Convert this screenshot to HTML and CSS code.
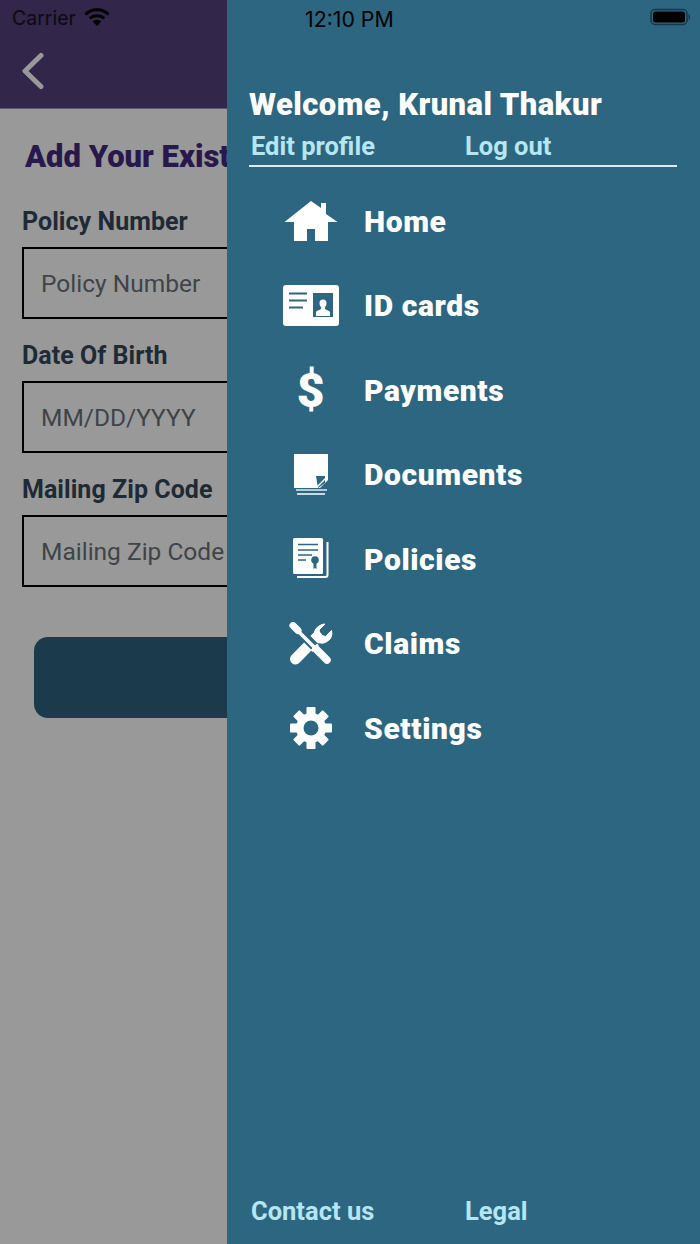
FILE: index.html
```html
<!DOCTYPE html>
<html lang="en">
<head>
    <meta charset="UTF-8">
    <meta name="viewport" content="width=device-width, initial-scale=1.0">
    <title>Menu</title>
    <link rel="stylesheet" href="styles.css">
</head>
<body>

    <!-- Status bar -->
    <div class="status-bar">
        <div class="status-left">
            <span>Carrier</span>
            <svg class="wifi" width="26" height="20" viewBox="0 0 26 20">
                <path d="M1.500 7.500a16.500 16.500 0 0 1 23 0" fill="none" stroke="#000" stroke-width="3"/>
                <path d="M5.800 11.500a10.500 10.500 0 0 1 14.400 0" fill="none" stroke="#000" stroke-width="3"/>
                <path d="M13 19l-4.200-4.600a6 6 0 0 1 8.400 0z" fill="#000"/>
            </svg>
        </div>
        <span class="status-time">12:10 PM</span>
        <svg class="battery" width="44" height="18" viewBox="0 0 44 18">
            <rect x="1" y="1.500" width="36" height="15" rx="4" fill="none" stroke="#16384a" stroke-width="1.500"/>
            <rect x="3" y="3.500" width="32" height="11" rx="2.500" fill="#000"/>
            <rect x="38.500" y="6.500" width="1.500" height="5" fill="#16384a"/>
        </svg>
    </div>

    <div class="screen">

        <!-- Page behind the menu -->
        <div class="page">
            <div class="page-header">
                <svg width="24" height="38" viewBox="0 0 24 38">
                    <path d="M20 3.500L4 19l16 15.500" fill="none" stroke="#999" stroke-width="5" stroke-linecap="round" stroke-linejoin="round"/>
                </svg>
            </div>
            <div class="page-body">
                <h2>Add Your Existing Policy</h2>
                <div class="field-label">Policy Number</div>
                <div class="field-box">Policy Number</div>
                <div class="field-label">Date Of Birth</div>
                <div class="field-box">MM/DD/YYYY</div>
                <div class="field-label">Mailing Zip Code</div>
                <div class="field-box">Mailing Zip Code</div>
                <div class="page-button"></div>
            </div>
        </div>

        <!-- Side menu -->
        <div class="drawer">
            <div class="welcome">Welcome, Krunal Thakur</div>
            <div class="profile-links">
                <span class="link-cell">Edit profile</span>
                <span>Log out</span>
            </div>

            <div class="menu">
                <div class="menu-row">
                    <div class="menu-icon">
                        <svg width="54" height="44" viewBox="0 0 54 44">
                            <path d="M27 2L37 9V4h5v11l11.500 8H44v19H31V30h-8v12H10V23H.5z" fill="#fff"/>
                        </svg>
                    </div>
                    <span>Home</span>
                </div>
                <div class="menu-row">
                    <div class="menu-icon">
                        <svg width="56" height="42" viewBox="0 0 56 42">
                            <rect x="0" y="0" width="56" height="41" rx="3" fill="#fff"/>
                            <path d="M6 8.500h18M6 15.500h18M6 22.500h14" stroke="#2d6681" stroke-width="1.800"/>
                            <rect x="30" y="8" width="20" height="24" fill="#2d6681"/>
                            <path d="M33 31v-3.500c0-2 4-2.500 5-3.500v-2c-1-1-1.500-2-1.500-4a3.500 3.500 0 0 1 7 0c0 2-.5 3-1.500 4v2c1 1 5 1.500 5 3.500V31z" fill="#fff"/>
                        </svg>
                    </div>
                    <span>ID cards</span>
                </div>
                <div class="menu-row">
                    <div class="menu-icon dollar">$</div>
                    <span>Payments</span>
                </div>
                <div class="menu-row">
                    <div class="menu-icon">
                        <svg width="34" height="42" viewBox="0 0 34 42">
                            <path d="M0 0h34v26l-8 8H0z" fill="#fff"/>
                            <path d="M22 22h9v7l-7 5z" fill="#2d6681"/>
                            <path d="M23 33l9-9" stroke="#fff" stroke-width="1.500"/>
                            <path d="M2 36h31" stroke="#fff" stroke-width="1.300"/>
                            <path d="M3 40h28" stroke="#c5dce4" stroke-width="2"/>
                        </svg>
                    </div>
                    <span>Documents</span>
                </div>
                <div class="menu-row">
                    <div class="menu-icon">
                        <svg width="36" height="42" viewBox="0 0 36 42">
                            <rect x="0" y="0" width="30" height="36" rx="1.500" fill="#fff"/>
                            <path d="M34.500 4v33a2 2 0 0 1-2 2H4" fill="none" stroke="#fff" stroke-width="2"/>
                            <path d="M5 6.500h20M5 12h20M5 17h14M5 22h8" stroke="#2d6681" stroke-width="1.500"/>
                            <circle cx="22" cy="22" r="3.800" fill="#2d6681"/>
                            <path d="M20.500 25h3v6l-1.500-1-1.500 1z" fill="#2d6681"/>
                        </svg>
                    </div>
                    <span>Policies</span>
                </div>
                <div class="menu-row">
                    <div class="menu-icon">
                        <svg width="44" height="44" viewBox="0 0 44 44">
                            <path d="M6.500 37L28 15" stroke="#fff" stroke-width="11" stroke-linecap="round"/>
                            <path d="M26 17a10 10 0 0 1 4-13 10 10 0 0 1 6-2l-6 6 1.500 5 5 1.500 6-6a10 10 0 0 1-15 11z" fill="#fff" stroke="#fff" stroke-width="1"/>
                            <path d="M13 12l26 26" stroke="#2d6681" stroke-width="9"/>
                            <path d="M4 3.500l5 5" stroke="#fff" stroke-width="7" stroke-linecap="round"/>
                            <path d="M8 8l17 17" stroke="#fff" stroke-width="3.500"/>
                            <path d="M27 27l11 11" stroke="#fff" stroke-width="7.500" stroke-linecap="round"/>
                            <path d="M22.500 29l6.500-6.500" stroke="#fff" stroke-width="2.500"/>
                        </svg>
                    </div>
                    <span>Claims</span>
                </div>
                <div class="menu-row">
                    <div class="menu-icon">
                        <svg width="42" height="42" viewBox="0 0 42 42">
                            <g fill="#fff">
                                <circle cx="21" cy="21" r="15"/>
                                <rect x="16.500" y="0" width="9" height="42" rx="1"/>
                                <rect x="16.500" y="0" width="9" height="42" rx="1" transform="rotate(45 21 21)"/>
                                <rect x="16.500" y="0" width="9" height="42" rx="1" transform="rotate(90 21 21)"/>
                                <rect x="16.500" y="0" width="9" height="42" rx="1" transform="rotate(135 21 21)"/>
                            </g>
                            <circle cx="21" cy="21" r="7.500" fill="#2d6681"/>
                        </svg>
                    </div>
                    <span>Settings</span>
                </div>
            </div>

            <div class="drawer-footer">
                <span class="link-cell">Contact us</span>
                <span>Legal</span>
            </div>
        </div>
    </div>

</body>
</html>
```

FILE: styles.css
```css
/* General Styling */
* {
    box-sizing: border-box;
}

html, body {
    margin: 0;
    height: 100%;
}

body {
    font-family: Roboto, "Liberation Sans", sans-serif;
    background-color: #999;
    overflow: hidden;
}

.screen {
    display: flex;
    height: 1244px;
}

/* Status bar */
.status-bar {
    position: absolute;
    top: 0;
    left: 0;
    width: 700px;
    height: 36px;
    font-family: Inter, "Liberation Sans", sans-serif;
    color: #000;
}

.status-left {
    position: absolute;
    left: 12px;
    top: 6px;
    display: flex;
    align-items: flex-start;
    gap: 8px;
    font-size: 19.500px;
    color: #0b0b10;
}

.wifi {
    margin-top: 1px;
}

.status-time {
    position: absolute;
    left: 305px;
    top: 6px;
    font-size: 21.300px;
}

.battery {
    position: absolute;
    left: 650px;
    top: 8px;
}

/* Page behind the menu */
.page {
    width: 227px;
    flex-shrink: 0;
    overflow: hidden;
}

.page-header {
    height: 109px;
    background-color: #32264a;
    border-bottom: 1px solid #5f566f;
    padding: 52px 0 0 21px;
}

.page-body {
    width: 660px;
    padding: 29px 0 0 22px;
}

.page-body h2 {
    margin: 0 0 31px 3px;
    font-size: 31px;
    line-height: 38px;
    font-weight: 900;
    color: #29184c;
    white-space: nowrap;
}

.field-label {
    font-size: 25px;
    line-height: 30px;
    font-weight: 700;
    letter-spacing: 0.05px;
    color: #1e2a35;
    margin-bottom: 10px;
}

.field-box {
    height: 72px;
    margin-bottom: 22px;
    padding: 0 0 0 17px;
    border: 2px solid #000;
    display: flex;
    align-items: center;
    font-size: 24.500px;
    color: #404448;
}

.page-button {
    width: 600px;
    height: 81px;
    margin: 50px 0 0 12px;
    background-color: #1b3a4b;
    border-radius: 14px;
}

/* Side menu */
.drawer {
    flex: 1;
    background-color: #2d6681;
    padding: 88px 23px 0 22px;
    display: flex;
    flex-direction: column;
    color: #fff;
}

.welcome {
    font-size: 31px;
    line-height: 34px;
    font-weight: 900;
    letter-spacing: 0.45px;
}

.profile-links {
    display: flex;
    height: 45px;
    padding: 9px 0 0 2px;
    border-bottom: 2px solid #d9eef3;
    font-size: 25.500px;
    font-weight: 700;
    color: #b5e6f2;
}

.link-cell {
    width: 214px;
}

.menu {
    flex: 1;
    padding-top: 12px;
}

.menu-row {
    display: flex;
    align-items: center;
    height: 84.500px;
    font-size: 30px;
    font-weight: 900;
    letter-spacing: 0.6px;
}

.menu-icon {
    width: 56px;
    margin: 0 25px 0 34px;
    display: flex;
    justify-content: center;
    align-items: center;
}

.dollar {
    font-family: Roboto, sans-serif;
    font-size: 48px;
    font-weight: 900;
}

.drawer-footer {
    display: flex;
    padding: 0 0 17px 2px;
    font-size: 25.500px;
    line-height: 32px;
    font-weight: 700;
    color: #b5e6f2;
}
```
